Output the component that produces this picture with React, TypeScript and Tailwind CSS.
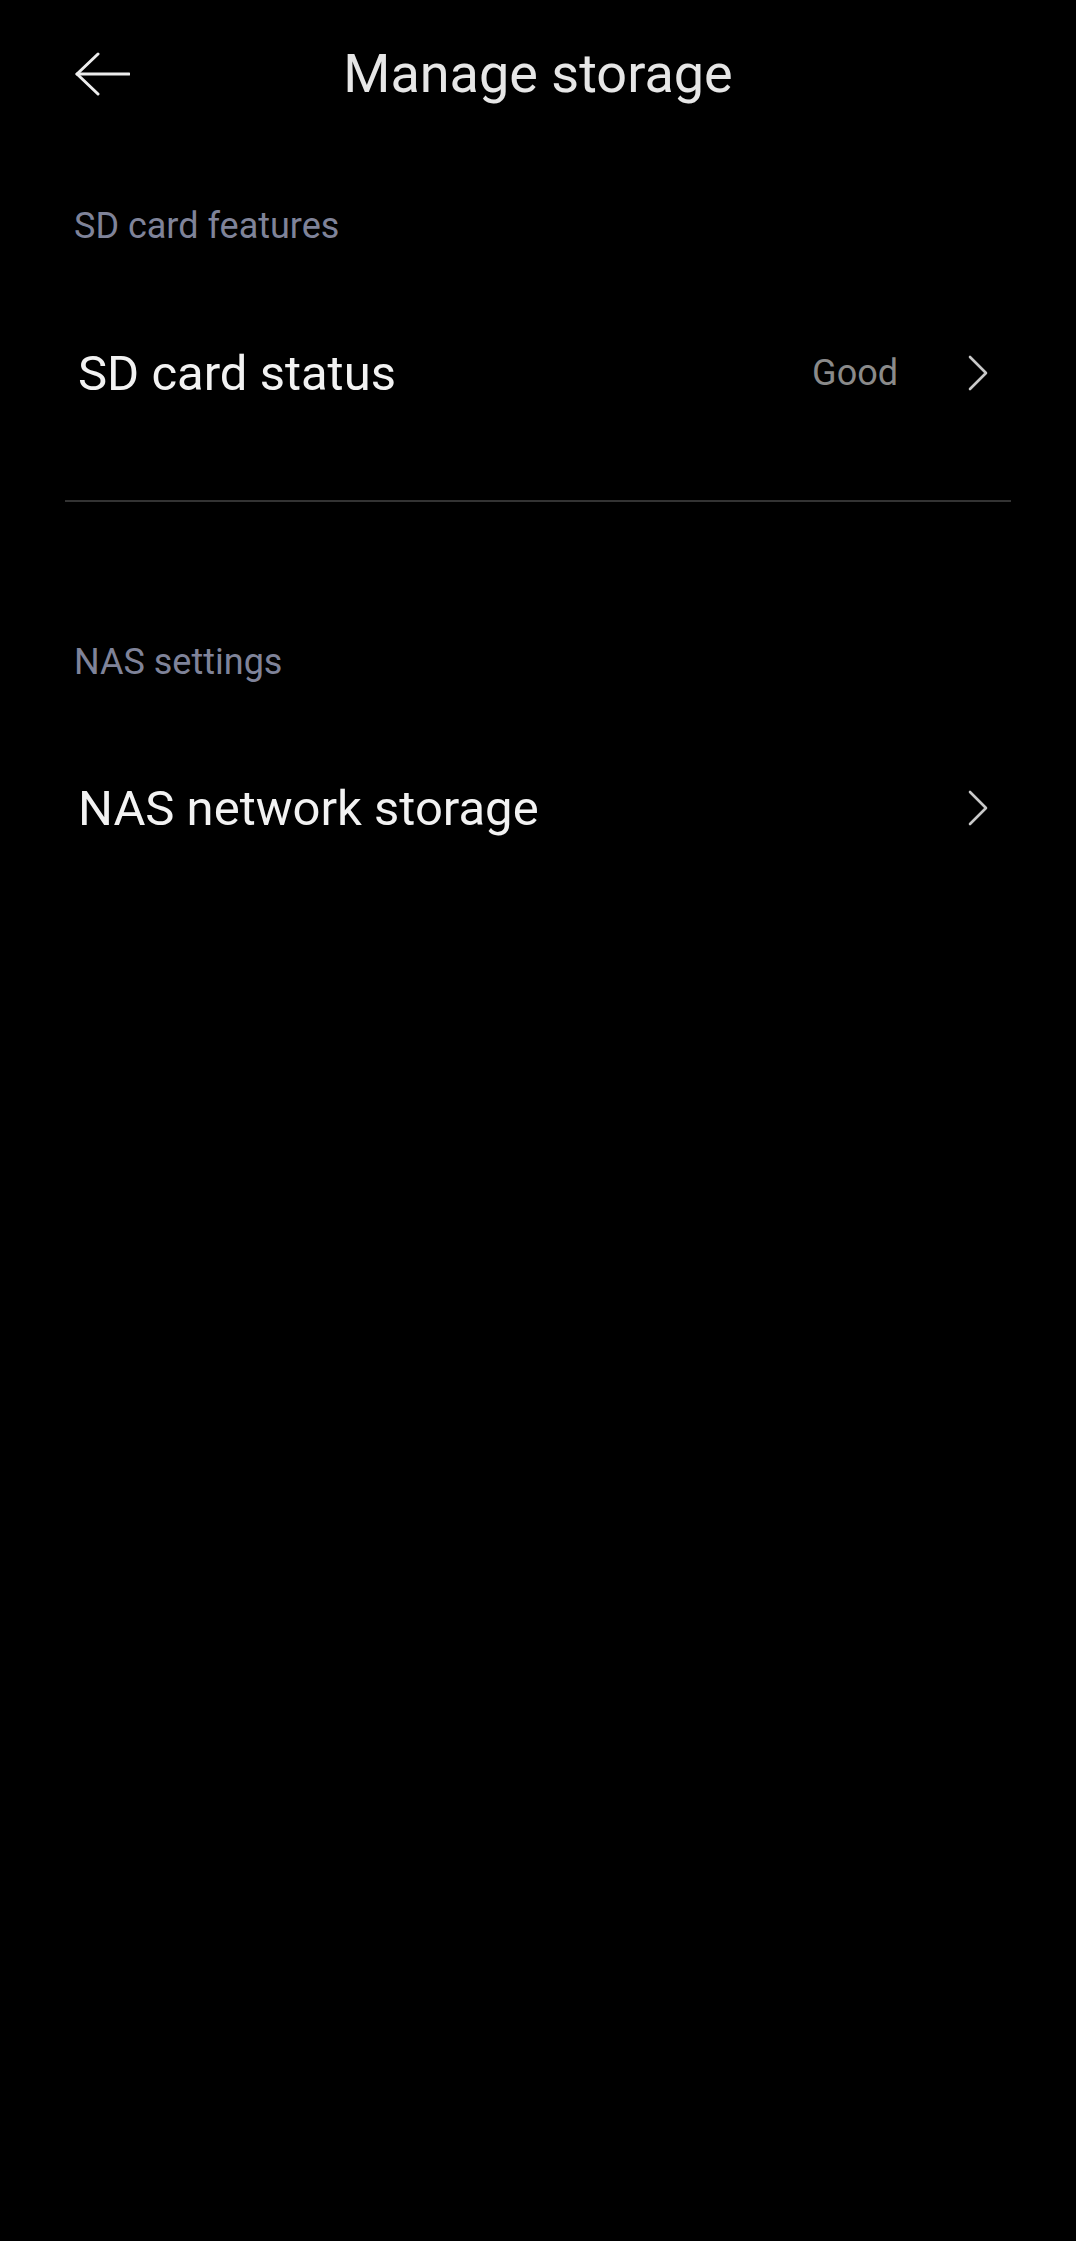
import React from "react";

function BackArrow() {
    return (
        <svg width="56" height="44" viewBox="0 0 56 44" fill="none" stroke="#ededed" strokeWidth="3" strokeLinecap="round" strokeLinejoin="round">
            <path d="M3 22 H55" />
            <path d="M24 2 L3 22 L24 42" />
        </svg>
    );
}

function Chevron() {
    return (
        <svg width="20" height="36" viewBox="0 0 20 36" fill="none" stroke="#c9c9c9" strokeWidth="2.6" strokeLinecap="round" strokeLinejoin="round">
            <path d="M2 2 L18 18 L2 34" />
        </svg>
    );
}

function SectionLabel({ children }: { children: React.ReactNode }) {
    return <div className="px-[74px] text-[36px] leading-[34px] h-[34px] text-[#7f8399]">{children}</div>;
}

function Row({ title, value }: { title: string; value?: string }) {
    return (
        <div className="flex h-[120px] items-center pl-[78px] pr-[88px]">
            <span className="flex-1 text-[49px] leading-none text-[#f2f2f2]">{title}</span>
            {value && <span className="mr-[70px] text-[36px] leading-none text-[#8a8a8a]">{value}</span>}
            <Chevron />
        </div>
    );
}

export default function App() {
    return (
        <div className="min-h-[2241px] w-full bg-black" style={{ fontFamily: "Roboto, 'Liberation Sans', sans-serif" }}>
            <header className="flex h-[148px] items-center">
                <div className="flex w-[130px] justify-end">
                    <BackArrow />
                </div>
                <h1 className="flex-1 text-center text-[54px] leading-none font-normal text-[#e6e6e6]">Manage storage</h1>
                <div className="w-[130px]" />
            </header>

            <div className="pt-[61px]">
                <SectionLabel>SD card features</SectionLabel>
            </div>
            <div className="mt-[70px]">
                <Row title="SD card status" value="Good" />
            </div>
            <div className="mx-[65px] mt-[67px] border-t-2 border-[#333333]" />

            <div className="mt-[143px]">
                <SectionLabel>NAS settings</SectionLabel>
            </div>
            <div className="mt-[69px]">
                <Row title="NAS network storage" />
            </div>
        </div>
    );
}
